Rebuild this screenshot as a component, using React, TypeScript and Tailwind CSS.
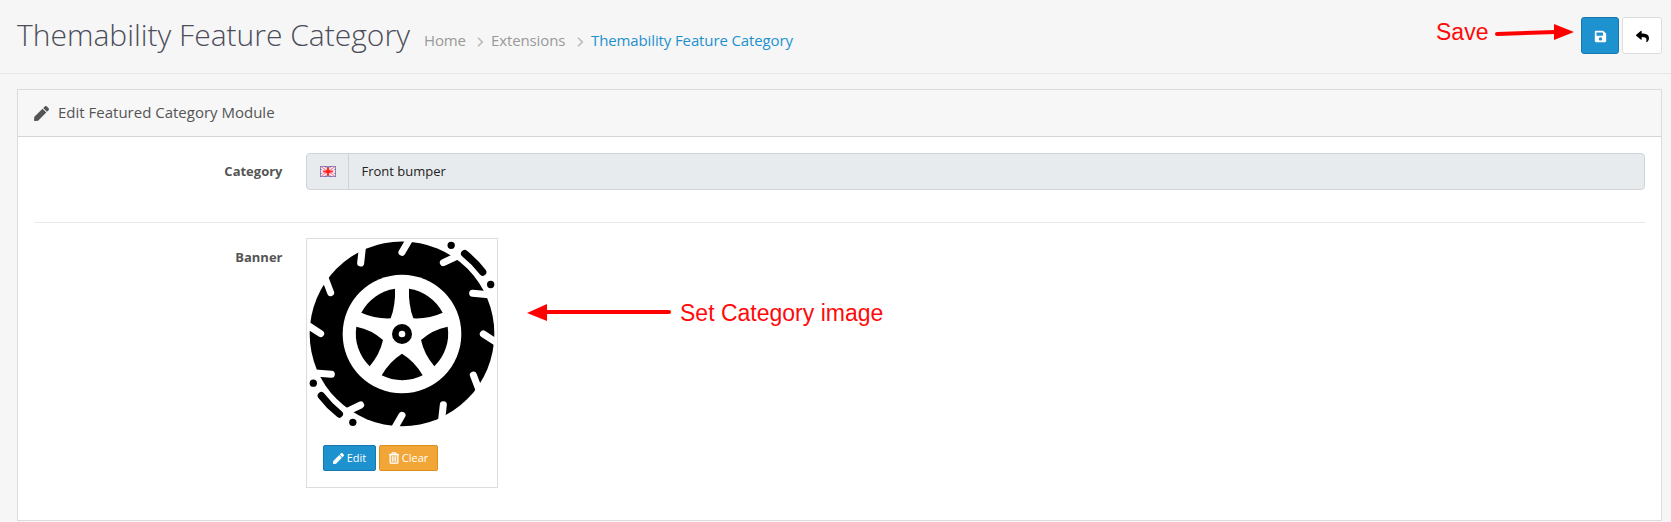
import { FaPen, FaRegTrashAlt, FaReply, FaSave } from "react-icons/fa";

const CUTS = "M306 67L328 29M430 98L478 75M518 190L566 194M550 312L590 338M520 435L538 482M430 524L424 578";

function Treads() {
  return (
    <g>
      <path d={CUTS} stroke="#fff" strokeWidth="21" strokeLinecap="round" />
      <path d="M494 71Q525 96 548 126" stroke="#000" strokeWidth="22" strokeLinecap="round" />
      <circle cx="453.500" cy="46" r="11" fill="#000" />
      <circle cx="572" cy="163.500" r="11" fill="#000" />
    </g>
  );
}

function Wheel() {
  return (
    <svg viewBox="21 27 570 570" className="block h-[190px] w-[190px]" fill="none">
      <circle cx="306" cy="311.500" r="277" fill="#000" />
      <Treads />
      <g transform="rotate(180 306 311.500)">
        <Treads />
      </g>
      <circle cx="306" cy="312" r="178" fill="#fff" />
      <g fill="#000">
        <path d="M285 176A137 137 0 0 0 184 248Q225 267 272 265Q287 225 285 176Z" />
        <path d="M327 176A137 137 0 0 1 428 248Q387 267 340 265Q325 225 327 176Z" />
        <path d="M169 290A137 137 0 0 0 209 409Q240 372 249 330Q215 299 169 290Z" />
        <path d="M443 290A137 137 0 0 1 403 409Q372 372 363 330Q397 299 443 290Z" />
        <path d="M245 436A137 137 0 0 0 368 436Q345 395 306 371Q268 395 245 436Z" />
        <circle cx="306" cy="312" r="30" />
      </g>
      <circle cx="306" cy="312" r="10" fill="#fff" />
    </svg>
  );
}

function Flag() {
  return (
    <svg viewBox="0 0 16 11" className="h-[11px] w-4">
      <rect width="16" height="11" fill="#8f9bd3" />
      <path d="M0 0L16 11M16 0L0 11" stroke="#fff" strokeWidth="3.400" />
      <path d="M0 0L16 11M16 0L0 11" stroke="#f58a8f" strokeWidth="1.200" />
      <path d="M8 0V11M0 5.500H16" stroke="#f9dce4" strokeWidth="3" />
      <path d="M8 1V10M3 5.500H13" stroke="#ff3b3b" strokeWidth="2" />
      <path d="M5 5.500L8 2.500L11 5.500L8 8.500Z" fill="#ff2020" />
      <rect x=".5" y=".5" width="15" height="10" fill="none" stroke="#5d559c" strokeOpacity=".6" />
    </svg>
  );
}

function Chevron() {
  return (
    <svg viewBox="0 0 7 10" className="mt-[3px] h-[10px] w-[7px]" fill="none">
      <path d="M1 .8L5.300 5L1 9.200" stroke="#bbb" strokeWidth="1.600" />
    </svg>
  );
}

export default function App() {
  return (
    <div className="relative h-[522px] w-[1671px] overflow-hidden bg-[#f6f6f6] font-['Open_Sans',sans-serif] text-[13px] text-[#555]">
      <header className="flex h-[74px] items-start justify-between border-b border-[#e7e7e7] pr-[9px] pl-[17px]">
        <div className="flex">
          <h1 className="mt-[14px] w-[407px] text-[30px] leading-[42px] font-light whitespace-nowrap text-[#4c4d5a]">
            Themability Feature Category
          </h1>
          <nav className="mt-[30px] flex h-5 items-center text-[15px] leading-5 tracking-[-0.12px] whitespace-nowrap text-[#999]">
            <span className="w-[53px]">Home</span>
            <Chevron />
            <span className="ml-[7px] w-[86px]">Extensions</span>
            <Chevron />
            <span className="ml-[7px] text-[#1e91cf]">Themability Feature Category</span>
          </nav>
        </div>
        <div className="mt-[17px] flex gap-[3px]">
          <button className="flex h-[37px] w-[38px] items-center justify-center rounded-[3px] border border-[#1978ab] bg-[#1e91cf] text-white">
            <FaSave className="mt-px h-[13px] w-[13px]" />
          </button>
          <button className="flex h-[37px] w-10 items-center justify-center rounded-[3px] border border-[#ddd] bg-white text-black">
            <FaReply className="mt-px h-[13px] w-[13px]" />
          </button>
        </div>
      </header>

      <main className="mt-[15px] ml-[17px] h-[432px] w-[1645px] border border-[#dcdcdc] bg-white">
        <div className="flex h-[47px] items-center border-b border-[#d5d5d5] bg-[#f7f7f7] pl-4">
          <FaPen className="h-[15px] w-[15px]" />
          <h3 className="mb-[2px] ml-[9px] text-[15px] leading-5">Edit Featured Category Module</h3>
        </div>
        <div className="px-4 pt-4">
          <div className="flex">
            <label className="w-[249px] pt-[9px] pr-[0.5px] text-right leading-[18px] font-bold">Category</label>
            <div className="ml-[23px] flex h-[37px] w-[1339px] overflow-hidden rounded-[4px] border border-[#ced4da] bg-[#e8ebee] text-[#222]">
              <div className="flex w-[42px] items-center justify-center border-r border-[#ced4da]">
                <Flag />
              </div>
              <div className="flex items-center pl-[12.5px]">Front bumper</div>
            </div>
          </div>
          <div className="mt-8 h-px bg-[#e9e9e9]" />
          <div className="mt-[15px] flex">
            <label className="w-[249px] pt-[10px] pr-[0.5px] text-right leading-[18px] font-bold">Banner</label>
            <div className="ml-[23px] h-[250px] w-[192px] border border-[#ddd]">
              <Wheel />
              <div className="mt-4 ml-4 flex gap-[3px] text-[11px] text-white">
                <button className="flex h-[26px] w-[53px] items-center justify-center gap-[3px] rounded-[2px] border border-[#1978ab] bg-[#1e91cf]">
                  <FaPen className="h-[11px] w-[11px]" />
                  Edit
                </button>
                <button className="flex h-[26px] w-[59px] items-center justify-center gap-[3px] rounded-[2px] border border-[#dc8f1f] bg-[#f3a638]">
                  <FaRegTrashAlt className="h-[12px] w-[10px]" strokeWidth="18" stroke="currentColor" />
                  Clear
                </button>
              </div>
            </div>
          </div>
        </div>
      </main>

      <div className="absolute top-[18px] left-[1436px] flex font-['Liberation_Sans',sans-serif] text-[23px] leading-7 text-[#ff0a0a]">
        <span className="w-[58px]">Save</span>
        <svg viewBox="0 0 82 28" className="h-7 w-[82px]">
          <path d="M3 16L62 14" stroke="#f00" strokeWidth="4" strokeLinecap="round" />
          <path d="M60 6L80 14L60 22Z" fill="#f00" />
        </svg>
      </div>
      <div className="absolute top-[299px] left-[526px] flex font-['Liberation_Sans',sans-serif] text-[23px] leading-7 text-[#ff0a0a]">
        <svg viewBox="0 0 154 28" className="h-7 w-[154px]">
          <path d="M18 13L143 13" stroke="#f00" strokeWidth="4" strokeLinecap="round" />
          <path d="M1 14L21 5V22Z" fill="#f00" />
        </svg>
        <span className="whitespace-nowrap">Set Category image</span>
      </div>
    </div>
  );
}
